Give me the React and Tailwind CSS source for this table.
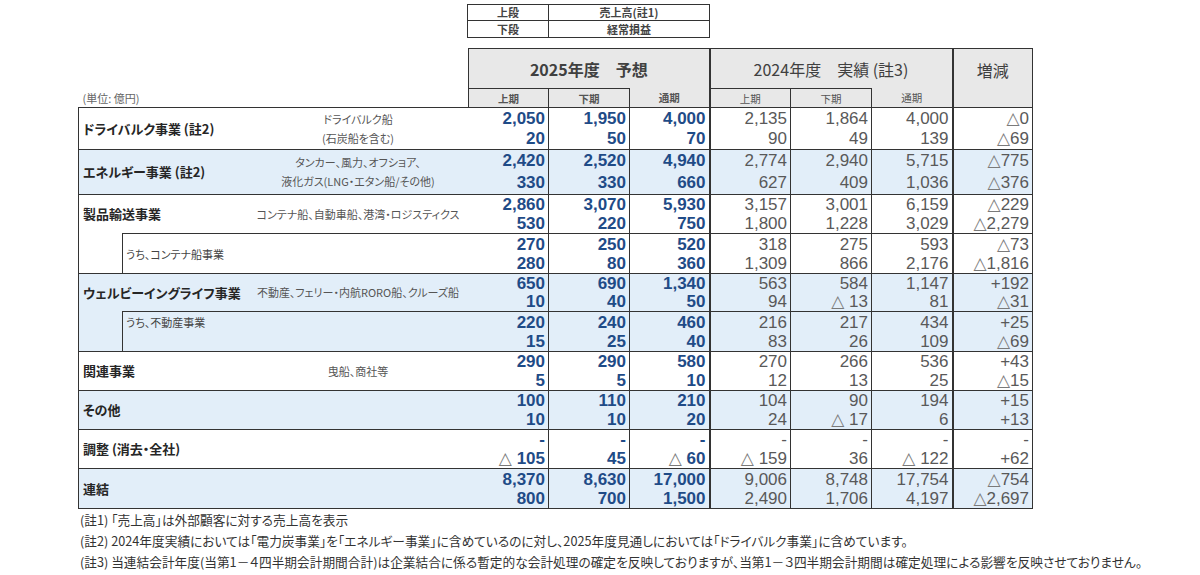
import React from "react";

const JP = "font-['Noto_Sans_CJK_JP',sans-serif] [font-feature-settings:'palt']";
const NUM = "font-['Liberation_Sans','Noto_Sans_CJK_JP',sans-serif]";
const LINE = "border-[#333]";

const rows = [
  {
    label: "ドライバルク事業 (註2)",
    desc: ["ドライバルク船", "(石炭船を含む)"],
    blue: false,
    h: "h-[42px]",
    lh: "h-[20px] leading-[20px]",
    vals: [["2,050", "20"], ["1,950", "50"], ["4,000", "70"], ["2,135", "90"], ["1,864", "49"], ["4,000", "139"], ["△0", "△69"]],
  },
  {
    label: "エネルギー事業 (註2)",
    desc: ["タンカー、風力、オフショア、", "液化ガス(LNG・エタン船/その他)"],
    blue: true,
    h: "h-[45px]",
    lh: "h-[22px] leading-[22px]",
    vals: [["2,420", "330"], ["2,520", "330"], ["4,940", "660"], ["2,774", "627"], ["2,940", "409"], ["5,715", "1,036"], ["△775", "△376"]],
  },
  {
    label: "製品輸送事業",
    desc: ["コンテナ船、自動車船、港湾・ロジスティクス"],
    blue: false,
    h: "h-[39px]",
    lh: "h-[19px] leading-[19px]",
    vals: [["2,860", "530"], ["3,070", "220"], ["5,930", "750"], ["3,157", "1,800"], ["3,001", "1,228"], ["6,159", "3,029"], ["△229", "△2,279"]],
  },
  {
    sub: "うち、コンテナ船事業",
    blue: false,
    h: "h-[40px]",
    lh: "h-[19px] leading-[19px]",
    vals: [["270", "280"], ["250", "80"], ["520", "360"], ["318", "1,309"], ["275", "866"], ["593", "2,176"], ["△73", "△1,816"]],
  },
  {
    label: "ウェルビーイングライフ事業",
    desc: ["不動産、フェリー・内航RORO船、クルーズ船"],
    blue: true,
    h: "h-[38px]",
    lh: "h-[18px] leading-[18px]",
    vals: [["650", "10"], ["690", "40"], ["1,340", "50"], ["563", "94"], ["584", "△ 13"], ["1,147", "81"], ["+192", "△31"]],
  },
  {
    sub: "うち、不動産事業",
    subTop: true,
    blue: true,
    h: "h-[40px]",
    lh: "h-[19px] leading-[19px]",
    vals: [["220", "15"], ["240", "25"], ["460", "40"], ["216", "83"], ["217", "26"], ["434", "109"], ["+25", "△69"]],
  },
  {
    label: "関連事業",
    desc: ["曳船、商社等"],
    blue: false,
    h: "h-[39px]",
    lh: "h-[19px] leading-[19px]",
    vals: [["290", "5"], ["290", "5"], ["580", "10"], ["270", "12"], ["266", "13"], ["536", "25"], ["+43", "△15"]],
  },
  {
    label: "その他",
    blue: true,
    h: "h-[39px]",
    lh: "h-[19px] leading-[19px]",
    vals: [["100", "10"], ["110", "10"], ["210", "20"], ["104", "24"], ["90", "△ 17"], ["194", "6"], ["+15", "+13"]],
  },
  {
    label: "調整 (消去・全社)",
    blue: false,
    h: "h-[39px]",
    lh: "h-[19px] leading-[19px]",
    vals: [["-", "△ 105"], ["-", "45"], ["-", "△ 60"], ["-", "△ 159"], ["-", "36"], ["-", "△ 122"], ["-", "+62"]],
  },
  {
    label: "連結",
    blue: true,
    last: true,
    h: "h-[40px]",
    lh: "h-[19px] leading-[19px]",
    vals: [["8,370", "800"], ["8,630", "700"], ["17,000", "1,500"], ["9,006", "2,490"], ["8,748", "1,706"], ["17,754", "4,197"], ["△754", "△2,697"]],
  },
];

const Num = ({ v }) => {
  if (v.startsWith("△")) {
    return (
      <>
        <span className="font-['DejaVu_Sans',sans-serif] font-normal text-[17px] leading-none text-[#7a7a7a]">△</span>
        {v.slice(1)}
      </>
    );
  }
  return v;
};

const numCell = (i, row) => {
  const right = i === 2 || i === 5 ? "border-r-2" : "border-r";
  const color = i < 3 ? "font-bold text-[#1f4b87]" : "font-normal text-[#595959]";
  return `${NUM} ${LINE} border-t ${right} ${row.last ? "border-b" : ""} ${color} text-[17px] text-right align-middle p-0 pr-[3px]`;
};

const App = () => {
  return (
    <div className={`${JP} w-[1200px] h-[575px] bg-white pt-[4px] pl-[78px] overflow-hidden`}>
      {/* legend */}
      <table className="ml-[389px] w-[242px] table-fixed border-collapse text-[11px] font-bold text-[#444] leading-none">
        <colgroup>
          <col className="w-[81px]" />
          <col className="w-[161px]" />
        </colgroup>
        <tbody>
          <tr className="h-[16px]">
            <td className={`border ${LINE} text-center p-0`}>上段</td>
            <td className={`border ${LINE} text-center p-0`}>売上高(註1)</td>
          </tr>
          <tr className="h-[17px]">
            <td className={`border ${LINE} text-center p-0`}>下段</td>
            <td className={`border ${LINE} text-center p-0`}>経常損益</td>
          </tr>
        </tbody>
      </table>

      {/* main table */}
      <table className="mt-[10px] w-[954px] table-fixed border-collapse">
        <colgroup>
          <col className="w-[44px]" />
          <col className="w-[346px]" />
          <col className="w-[80px]" />
          <col className="w-[81px]" />
          <col className="w-[80px]" />
          <col className="w-[81px]" />
          <col className="w-[81px]" />
          <col className="w-[81px]" />
          <col className="w-[80px]" />
        </colgroup>
        <thead>
          <tr className="h-[40px]">
            <th colSpan={2} rowSpan={2} className="p-0 align-bottom text-left">
              <div className="pl-[4px] pb-[2px] text-[11px] leading-[14px] font-normal text-[#666]">
                (単位: 億円)
              </div>
            </th>
            <th
              colSpan={3}
              className={`${LINE} border-t border-l border-r-2 bg-[#e8e8e8] p-0 text-[16px] font-bold text-[#404040] leading-[20px]`}
            >
              2025年度　予想
            </th>
            <th
              colSpan={3}
              className={`${LINE} border-t border-r-2 bg-[#e8e8e8] p-0 text-[16px] font-normal text-[#404040] leading-[20px]`}
            >
              2024年度　実績 (註3)
            </th>
            <th
              rowSpan={2}
              className={`${LINE} border-t border-r bg-[#e8e8e8] p-0 pt-[11px] align-top text-[16px] font-normal text-[#404040] leading-[20px]`}
            >
              増減
            </th>
          </tr>
          <tr className="h-[19px] text-[10.5px] leading-[17px] text-[#555]">
            <th className={`${LINE} border-t border-l border-r bg-[#e8e8e8] p-0 font-bold`}>上期</th>
            <th className={`${LINE} border-t border-r bg-[#e8e8e8] p-0 font-bold`}>下期</th>
            <th className={`${LINE} border-r-2 bg-[#e8e8e8] p-0 font-bold`}>通期</th>
            <th className={`${LINE} border-t border-r bg-[#e8e8e8] p-0 font-normal`}>上期</th>
            <th className={`${LINE} border-t border-r bg-[#e8e8e8] p-0 font-normal`}>下期</th>
            <th className={`${LINE} border-r-2 bg-[#e8e8e8] p-0 font-normal`}>通期</th>
          </tr>
        </thead>
        <tbody>
          {rows.map((row, idx) => (
            <tr key={idx} className={`${row.h} ${row.blue ? "bg-[#e2eef9]" : "bg-white"}`}>
              {row.sub ? (
                <>
                  <td className={`${LINE} border-l p-0`}></td>
                  <td className={`${LINE} border-t border-l p-0 ${row.subTop ? "align-top" : "align-middle"}`}>
                    <div className={`pl-[3px] h-[16px] text-[11px] leading-[16px] text-[#444] ${row.subTop ? "pt-[2px]" : ""}`}>
                      {row.sub}
                    </div>
                  </td>
                </>
              ) : (
                <td colSpan={2} className={`${LINE} border-t border-l ${row.last ? "border-b" : ""} p-0 align-middle`}>
                  <div className="flex items-center">
                    <div className="flex-1 pl-[4px] text-[13px] leading-[18px] font-bold text-[#262626] whitespace-nowrap">
                      {row.label}
                    </div>
                    {row.desc && (
                      <div className="w-[215px] mr-[3px] text-center text-[11px] leading-[19px] text-[#555] whitespace-nowrap">
                        {row.desc.map((d) => (
                          <div key={d}>{d}</div>
                        ))}
                      </div>
                    )}
                  </div>
                </td>
              )}
              {row.vals.map((pair, i) => (
                <td key={i} className={numCell(i, row)}>
                  <div className={`${row.lh} overflow-visible whitespace-nowrap`}>
                    <Num v={pair[0]} />
                  </div>
                  <div className={`${row.lh} overflow-visible whitespace-nowrap`}>
                    <Num v={pair[1]} />
                  </div>
                </td>
              ))}
            </tr>
          ))}
        </tbody>
      </table>

      {/* notes */}
      <div className="pl-[2px] text-[12.7px] leading-[21px] text-[#333]">
        <p>(註1) 「売上高」は外部顧客に対する売上高を表示</p>
        <p>(註2) 2024年度実績においては「電力炭事業」を「エネルギー事業」に含めているのに対し、2025年度見通しにおいては「ドライバルク事業」に含めています。</p>
        <p>(註3) 当連結会計年度(当第1－４四半期会計期間合計)は企業結合に係る暫定的な会計処理の確定を反映しておりますが、当第1－３四半期会計期間は確定処理による影響を反映させておりません。</p>
      </div>
    </div>
  );
};

export default App;
